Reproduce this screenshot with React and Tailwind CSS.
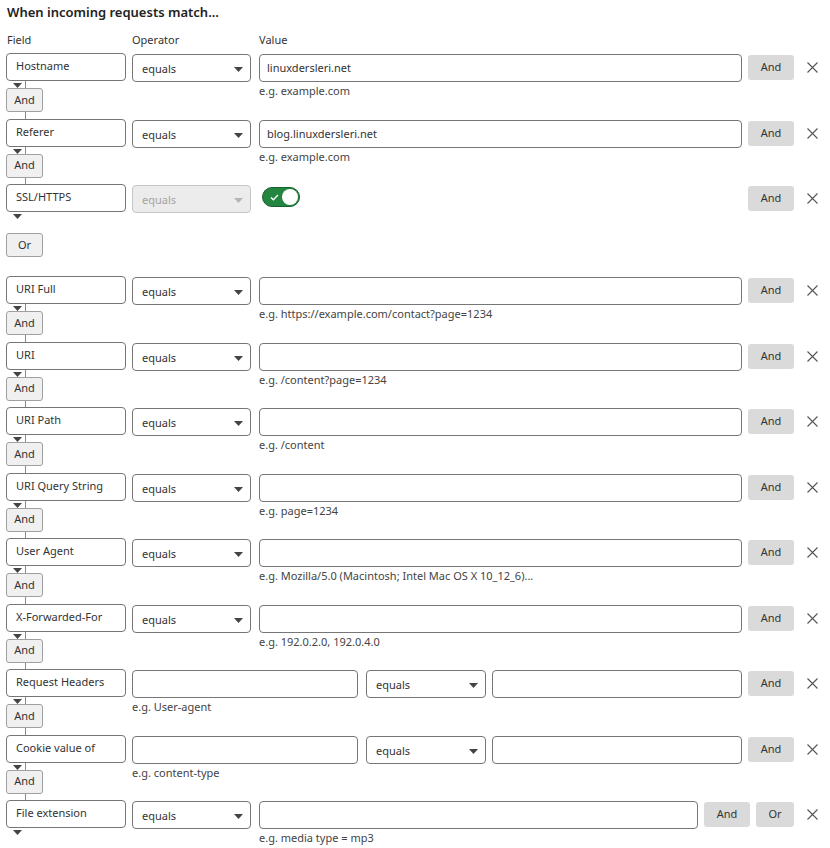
import React from "react";

const Caret = ({ light }) => (
  <svg width="9" height="5" viewBox="0 0 9 5" className="shrink-0">
    <path d="M0 0h9L4.5 5z" fill={light ? "#b5b5b5" : "#444"} />
  </svg>
);

const Close = () => (
  <svg width="11" height="11" viewBox="0 0 11 11">
    <path d="M0.5 0.5l10 10M10.5 0.5l-10 10" stroke="#555" strokeWidth="1.1" />
  </svg>
);

function FieldBox({ label }) {
  return (
    <div className="h-[28px] w-[120px] rounded-[4px] border border-[#767676] bg-white pl-[9px] pt-[4px] text-[11px] leading-[16px] text-[#333]">
      {label}
    </div>
  );
}

function Select({ width = "w-[119px]", disabled = false }) {
  return (
    <div
      className={`mt-[1px] flex h-[28px] ${width} items-center justify-between rounded-[4px] border pl-[9px] pr-[7px] pt-[3px] text-[11px] ${
        disabled ? "border-[#c6c6c6] bg-[#ececec] text-[#a3a3a3]" : "border-[#767676] bg-white text-[#333]"
      }`}
    >
      <span>equals</span>
      <Caret light={disabled} />
    </div>
  );
}

function TextInput({ value, hint, className = "flex-1" }) {
  return (
    <div className={`${className} mt-[1px]`}>
      <div className="flex h-[28px] items-center rounded-[4px] border border-[#767676] bg-white pl-[7px] pt-[1px] text-[11px] text-[#333]">
        {value}
      </div>
      {hint && <div className="mt-[2px] text-[11px] leading-[14px] text-[#444]">{hint}</div>}
    </div>
  );
}

function GrayBtn({ children, w = "w-[46px]" }) {
  return (
    <div className={`mt-[2px] flex h-[25px] ${w} items-center justify-center rounded-[3px] bg-[#dadada] text-[11px] text-[#333]`}>
      {children}
    </div>
  );
}

function Connector({ h, tri }) {
  return (
    <div className={`flex ${h}`}>
      <div className="w-[19px] pl-[7px] pt-[2px]">{tri && <Caret />}</div>
      <div className="w-px bg-[#8a8a8a]" />
    </div>
  );
}

function LogicBtn({ children }) {
  return (
    <div className="flex h-[24px] w-[37px] items-center justify-center rounded-[3px] border border-[#a0a0a0] bg-[#f0f0f0] text-[11px] text-[#333]">
      {children}
    </div>
  );
}

function Left({ label, last }) {
  return (
    <div className="flex w-[120px] shrink-0 flex-col">
      <FieldBox label={label} />
      {last ? (
        <div className="h-[10px] pl-[7px] pt-[2px]">
          <Caret />
        </div>
      ) : (
        <>
          <Connector h="h-[7px]" tri />
          <LogicBtn>And</LogicBtn>
          <Connector h="h-[6.5px]" />
        </>
      )}
    </div>
  );
}

function Actions({ or }) {
  return (
    <div className="ml-[6px] flex shrink-0">
      <GrayBtn>And</GrayBtn>
      {or && (
        <div className="ml-[6px]">
          <GrayBtn w="w-[38px]">Or</GrayBtn>
        </div>
      )}
      <div className="ml-[13px] mt-[9px] w-[11px]">
        <Close />
      </div>
    </div>
  );
}

function SimpleRow({ label, value, hint, last }) {
  return (
    <div className="flex items-start">
      <Left label={label} last={last} />
      <div className="ml-[6px]">
        <Select />
      </div>
      <TextInput value={value} hint={hint} className="ml-[8px] flex-1" />
      <Actions or={last} />
    </div>
  );
}

function HeaderRow({ label, hint }) {
  return (
    <div className="flex items-start">
      <Left label={label} />
      <TextInput hint={hint} className="ml-[6px] w-[226px]" />
      <div className="ml-[8px]">
        <Select width="w-[120px]" />
      </div>
      <TextInput className="ml-[6px] flex-1" />
      <Actions />
    </div>
  );
}

export default function App() {
  return (
    <div className="w-[830px] bg-white pl-[6px] pr-[12px] pt-[3px] pb-[6px] text-[#333]" style={{ fontFamily: "'Noto Sans', 'Open Sans', sans-serif" }}>
      <div className="pl-[1px] text-[13px] font-semibold leading-[18px] text-[#222]">When incoming requests match...</div>
      <div className="mt-[11px] flex text-[11px] leading-[16px] text-[#333]">
        <div className="w-[126px] pl-[1px]">Field</div>
        <div className="w-[127px]">Operator</div>
        <div>Value</div>
      </div>
      <div className="mt-[5px] flex flex-col">
        <SimpleRow label="Hostname" value="linuxdersleri.net" hint="e.g. example.com" />
        <SimpleRow label="Referer" value="blog.linuxdersleri.net" hint="e.g. example.com" />

        <div className="flex items-start">
          <div className="flex w-[120px] shrink-0 flex-col">
            <FieldBox label="SSL/HTTPS" />
            <div className="h-[21px] pl-[7px] pt-[2px]">
              <Caret />
            </div>
            <LogicBtn>Or</LogicBtn>
            <div className="h-[19px]" />
          </div>
          <div className="ml-[6px]">
            <Select disabled />
          </div>
          <div className="ml-[11px] mt-[3px] flex-1">
            <div className="flex h-[20px] w-[38px] items-center justify-between rounded-full border border-[#17622f] bg-[#23853f] pl-[7px] pr-[1px]">
              <svg width="9" height="7" viewBox="0 0 9 7">
                <path d="M1 3.5l2.3 2.3L8 1" stroke="#fff" strokeWidth="1.3" fill="none" />
              </svg>
              <div className="h-[16px] w-[16px] rounded-full bg-white" />
            </div>
          </div>
          <Actions />
        </div>

        <SimpleRow label="URI Full" hint="e.g. https://example.com/contact?page=1234" />
        <SimpleRow label="URI" hint="e.g. /content?page=1234" />
        <SimpleRow label="URI Path" hint="e.g. /content" />
        <SimpleRow label="URI Query String" hint="e.g. page=1234" />
        <SimpleRow label="User Agent" hint="e.g. Mozilla/5.0 (Macintosh; Intel Mac OS X 10_12_6)..." />
        <SimpleRow label="X-Forwarded-For" hint="e.g. 192.0.2.0, 192.0.4.0" />
        <HeaderRow label="Request Headers" hint="e.g. User-agent" />
        <HeaderRow label="Cookie value of" hint="e.g. content-type" />
        <SimpleRow label="File extension" hint="e.g. media type = mp3" last />
      </div>
    </div>
  );
}
